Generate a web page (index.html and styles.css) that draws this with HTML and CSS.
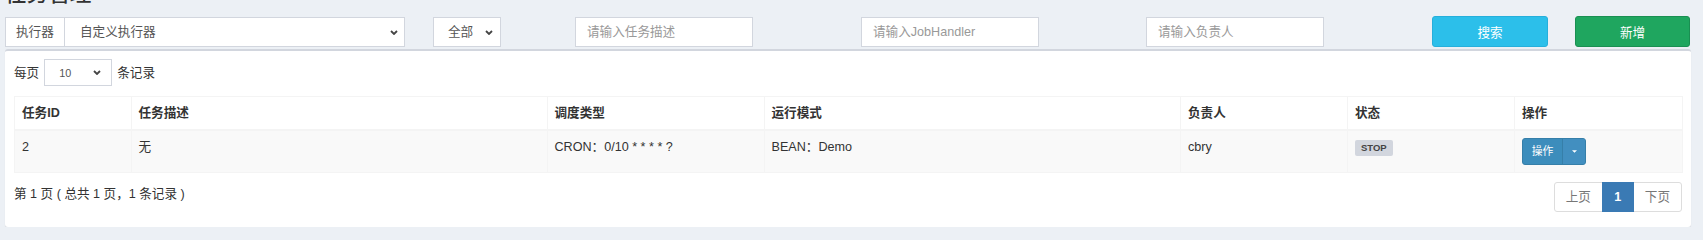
FILE: index.html
```html
<!DOCTYPE html>
<html>
<head>
    <meta charset="utf-8">
    <title>任务管理</title>
    <link rel="stylesheet" href="styles.css">
</head>
<body>
    <div class="content">
        <div class="content-header">
            <h1>任务管理</h1>
        </div>

        <div class="filter-row">
            <div class="input-group">
                <span class="addon">执行器</span>
                <div class="select select-wide">
                    <span>自定义执行器</span>
                    <svg class="chevron" viewBox="0 0 8 5"><path d="M1 1 L4 4 L7 1"/></svg>
                </div>
            </div>
            <div class="select select-status">
                <span>全部</span>
                <svg class="chevron" viewBox="0 0 8 5"><path d="M1 1 L4 4 L7 1"/></svg>
            </div>
            <input type="text" class="field" placeholder="请输入任务描述">
            <input type="text" class="field" placeholder="请输入JobHandler">
            <input type="text" class="field" placeholder="请输入负责人">
            <button class="btn btn-info">搜索</button>
            <button class="btn btn-success">新增</button>
        </div>

        <div class="box">
            <div class="length-row">
                <span>每页</span>
                <div class="select select-length">
                    <span>10</span>
                    <svg class="chevron" viewBox="0 0 8 5"><path d="M1 1 L4 4 L7 1"/></svg>
                </div>
                <span>条记录</span>
            </div>

            <table class="job-table">
                <colgroup>
                    <col style="width:116.5px">
                    <col style="width:416px">
                    <col style="width:217px">
                    <col style="width:416.5px">
                    <col style="width:167px">
                    <col style="width:167px">
                    <col style="width:167.5px">
                </colgroup>
                <thead>
                    <tr>
                        <th>任务ID</th>
                        <th>任务描述</th>
                        <th>调度类型</th>
                        <th>运行模式</th>
                        <th>负责人</th>
                        <th>状态</th>
                        <th>操作</th>
                    </tr>
                </thead>
                <tbody>
                    <tr>
                        <td>2</td>
                        <td>无</td>
                        <td>CRON：0/10 * * * * ?</td>
                        <td>BEAN：Demo</td>
                        <td>cbry</td>
                        <td><span class="label">STOP</span></td>
                        <td>
                            <div class="btn-group">
                                <span class="btn-op">操作</span>
                                <span class="btn-caret"><svg viewBox="0 0 6 3"><path d="M0 0 L6 0 L3 3 Z"/></svg></span>
                            </div>
                        </td>
                    </tr>
                </tbody>
            </table>

            <div class="footer-row">
                <div class="info">第 1 页 ( 总共 1 页，1 条记录 )</div>
                <ul class="pagination">
                    <li class="disabled">上页</li>
                    <li class="active">1</li>
                    <li class="disabled">下页</li>
                </ul>
            </div>
        </div>
    </div>
</body>
</html>
```

FILE: styles.css
```css
body {
    margin: 0;
    background-color: #ecf0f5;
    font-family: "Liberation Sans", "Noto Sans CJK SC", sans-serif;
    font-size: 12.6px;
    line-height: 18px;
    color: #333;
}
.content {
    width: 1686px;
    margin-left: 5px;
}
.content-header {
    display: flow-root;
    height: 17px;
}
.content-header h1 {
    margin: -19px 0 0;
    font-size: 21.6px;
    line-height: 26px;
    font-weight: 500;
    color: #333;
}

/* filter bar */
.filter-row {
    display: grid;
    grid-template-columns: 428px 142px 286px 285px 286px 143px 116px;
    height: 30px;
    align-items: stretch;
}
.input-group {
    display: flex;
    width: 400px;
}
.addon {
    width: 60px;
    box-sizing: border-box;
    border: 1px solid #d2d6de;
    background-color: #fff;
    padding: 0 10px;
    line-height: 28px;
    color: #555;
}
.select {
    display: flex;
    align-items: center;
    justify-content: space-between;
    box-sizing: border-box;
    border: 1px solid #d2d6de;
    background-color: #fff;
    color: #555;
}
.select-wide {
    flex: 1;
    border-left: none;
    padding: 0 6px 0 15px;
}
.select-status {
    width: 68px;
    padding: 0 7px 0 14px;
}
.chevron {
    width: 8px;
    height: 5px;
    fill: none;
    stroke: #444;
    stroke-width: 1.8;
}
.field {
    width: 178px;
    box-sizing: border-box;
    border: 1px solid #d2d6de;
    padding: 0 11px;
    font-family: inherit;
    font-size: 12.6px;
    color: #555;
    background-color: #fff;
}
.field::placeholder {
    color: #999;
}
.btn {
    box-sizing: border-box;
    height: 31px;
    width: 116px;
    margin-top: -1px;
    border-radius: 3px;
    font-family: inherit;
    font-size: 12.6px;
    color: #fff;
}
.btn-info {
    background-color: #2cbfea;
    border: 1px solid #26afdb;
}
.btn-success {
    width: 115px;
    background-color: #1fa65f;
    border: 1px solid #1a8f52;
}

/* box */
.box {
    margin-top: 2px;
    height: 178px;
    box-sizing: border-box;
    background-color: #fff;
    border-top: 2px solid #d2d6de;
    border-radius: 3px;
    box-shadow: 0 1px 1px rgba(0, 0, 0, 0.1);
    padding: 8px 9px 0;
}
.length-row {
    display: flex;
    align-items: center;
    gap: 5px;
    height: 27px;
    padding-left: 0;
}
.select-length {
    width: 68px;
    height: 27px;
    padding: 0 10px 0 14px;
    font-size: 10.8px;
}
.job-table {
    margin-top: 10px;
    width: 1668px;
    table-layout: fixed;
    border-collapse: collapse;
    border: 1px solid #f4f4f4;
}
.job-table th, .job-table td {
    border: 1px solid #f4f4f4;
    padding: 7px 7px 7px 7px;
    text-align: left;
    vertical-align: top;
}
.job-table th {
    font-weight: bold;
    border-bottom-width: 2px;
}
.job-table tbody tr {
    background-color: #f9f9f9;
}
.job-table td {
    height: 27px;
}
.label {
    display: inline-block;
    margin-top: 2px;
    padding: 1px 6px 2px;
    font-size: 9.5px;
    line-height: 13px;
    font-weight: bold;
    color: #444;
    background-color: #d2d6de;
    border-radius: 2px;
}
.btn-group {
    display: inline-flex;
    height: 27px;
    border-radius: 3px;
    overflow: hidden;
    background-color: #3c8dbc;
    border: 1px solid #367fa9;
    box-sizing: border-box;
    color: #fff;
    font-size: 10.8px;
}
.btn-op {
    width: 39px;
    text-align: center;
    line-height: 25px;
    border-right: 1px solid #367fa9;
}
.btn-caret {
    width: 22px;
    display: flex;
    align-items: center;
    justify-content: center;
    background-color: #428fc0;
}
.btn-caret svg {
    width: 5px;
    height: 3px;
    fill: #fff;
}

/* footer */
.footer-row {
    display: flex;
    justify-content: space-between;
    margin-top: 9px;
}
.info {
    padding-top: 3px;
}
.pagination {
    display: flex;
    margin: 0;
    padding: 0;
    list-style: none;
}
.pagination li {
    box-sizing: border-box;
    height: 30px;
    line-height: 28px;
    padding: 0 11px;
    border: 1px solid #ddd;
    color: #777;
    background-color: #fff;
}
.pagination li + li {
    margin-left: -1px;
}
.pagination li:first-child {
    border-radius: 3px 0 0 3px;
}
.pagination li:last-child {
    border-radius: 0 3px 3px 0;
}
.pagination .active {
    width: 32px;
    text-align: center;
    padding: 0;
    background-color: #3a7ab4;
    border-color: #3a7ab4;
    color: #fff;
    font-weight: bold;
    position: relative;
    z-index: 1;
}
```
